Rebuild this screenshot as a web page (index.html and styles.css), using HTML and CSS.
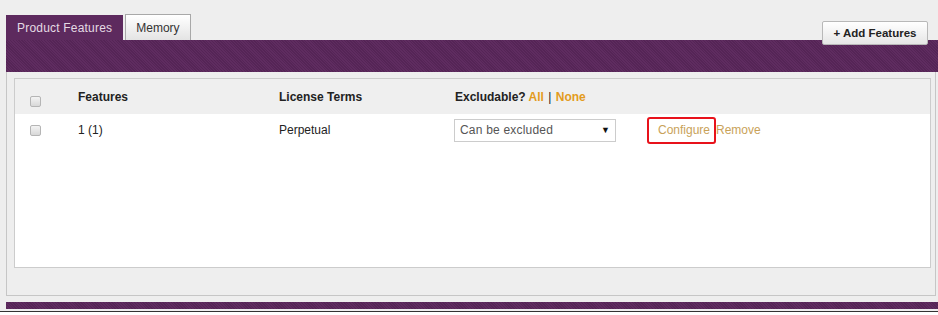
FILE: index.html
```html
<!DOCTYPE html>
<html lang="en">
<head>
    <meta charset="UTF-8">
    <link rel="stylesheet" href="styles.css">
</head>
<body>
    <div class="page">
        <!-- Abas -->
        <div class="tabbar">
            <div class="tab active">Product Features</div>
            <div class="tab">Memory</div>
            <button class="add-btn">+ Add Features</button>
        </div>
        <div class="band"></div>

        <!-- Painel -->
        <div class="panel">
            <div class="grid-box">
                <div class="row head">
                    <div class="cell-check"><span class="check"></span></div>
                    <div>Features</div>
                    <div>License Terms</div>
                    <div>Excludable? <a class="pick">All</a> <span class="sep">|</span> <a class="pick">None</a></div>
                    <div></div>
                </div>
                <div class="row">
                    <div class="cell-check"><span class="check"></span></div>
                    <div>1 (1)</div>
                    <div>Perpetual</div>
                    <div>
                        <div class="select">
                            <span>Can be excluded</span>
                            <span class="arrow">&#9660;</span>
                        </div>
                    </div>
                    <div class="actions">
                        <a class="action highlight">Configure</a><a class="action">Remove</a>
                    </div>
                </div>
            </div>
        </div>

        <div class="band-bottom"></div>
    </div>
    <div class="footer"></div>
</body>
</html>
```

FILE: styles.css
```css
* {
    margin: 0;
    padding: 0;
    box-sizing: border-box;
    font-family: "Liberation Sans", Arial, sans-serif;
}

html, body {
    height: 100%;
}

body {
    background: #ffffff;
    display: flex;
    flex-direction: column;
}

.page {
    background: #eeeeee;
    padding-left: 6px;
    padding-bottom: 2px;
}

.tabbar {
    height: 40px;
    display: flex;
    align-items: flex-end;
}

.tab {
    height: 26px;
    padding: 0 10px;
    display: flex;
    align-items: center;
    font-size: 12px;
    color: #333;
    background: linear-gradient(#ffffff, #e4e4e4);
    border: 1px solid #a8a8a8;
    border-bottom: none;
    margin-right: 2px;
}

.tab.active {
    height: 25px;
    padding: 0 11px;
    color: #e4dae4;
    letter-spacing: 0.2px;
    background: #5d2a5e;
    border: none;
}

.add-btn {
    margin-left: auto;
    margin-right: 10px;
    margin-bottom: -5px;
    position: relative;
    z-index: 1;
    width: 106px;
    height: 24px;
    border: 1px solid #b8b8b8;
    border-radius: 2px;
    background: linear-gradient(#ffffff, #e6e6e6);
    font-size: 11.5px;
    font-weight: bold;
    color: #222;
    cursor: pointer;
}

.band {
    height: 32px;
    background: repeating-linear-gradient(45deg, #5f2c60 0 1px, #552556 1px 2px);
}

.panel {
    margin-right: 2px;
    border: 1px solid #c6c6c6;
    border-top: none;
    padding: 6px 4px 27px 7px;
}

.grid-box {
    height: 190px;
    background: #ffffff;
    border: 1px solid #cccccc;
}

.row {
    display: grid;
    grid-template-columns: 48px 201px 176px 192px 1fr;
    align-items: center;
    padding-left: 15px;
    height: 32px;
    font-size: 12px;
    color: #222;
}

.row.head {
    height: 35px;
    background: #efefef;
    font-weight: bold;
}

.row.head .check {
    margin-top: 10px;
}

.cell-check {
    display: flex;
    align-items: center;
}

.check {
    display: block;
    width: 11px;
    height: 11px;
    border: 1px solid #b5b5b5;
    border-radius: 2px;
    background: linear-gradient(#f4f4f4, #d8d8d8);
}

.pick {
    color: #e39b1c;
}

.sep {
    font-weight: normal;
    margin: 0 1px;
}

.select {
    width: 162px;
    height: 23px;
    margin-left: -1px;
    border: 1px solid #cccccc;
    display: flex;
    align-items: center;
    justify-content: space-between;
    padding: 0 5px 0 5px;
    font-size: 12px;
    letter-spacing: 0.2px;
    color: #555;
}

.arrow {
    font-size: 9px;
    color: #111;
}

.actions {
    display: flex;
    align-items: center;
}

.action {
    color: #c9a259;
    font-size: 12px;
    cursor: pointer;
}

.action.highlight {
    height: 27px;
    padding: 0 4px 0 9px;
    display: flex;
    align-items: center;
    border: 2px solid #e8121b;
    border-radius: 3px;
}

.band-bottom {
    margin-top: 6px;
    height: 7px;
    background: repeating-linear-gradient(45deg, #5f2c60 0 1px, #552556 1px 2px);
}

.footer {
    flex: 1;
    border-top: 1px solid #333333;
    background: #ffffff;
}
```
